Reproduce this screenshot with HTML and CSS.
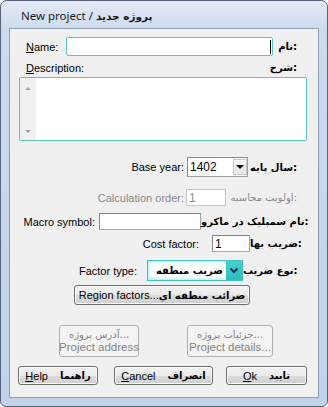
FILE: index.html
```html
<!DOCTYPE html>
<html>
<head>
<meta charset="utf-8">
<link rel="stylesheet" href="styles.css">
</head>
<body>
<div class="window">
  <div class="titlebar"><span class="title">New project / <span class="title-fa">پروژه جدید</span></span></div>
  <div class="client">
    <div class="row row-name">
      <span class="en en-name"><u>N</u>ame:</span>
      <div class="edit edit-teal name-edit"><span class="caret"></span></div>
      <span class="fa fa-name">نام:</span>
    </div>
    <div class="row row-desc">
      <span class="en en-desc"><u>D</u>escription:</span>
      <span class="fa">شرح:</span>
    </div>
    <div class="memo">
      <div class="vscroll"><span class="arr arr-up"></span><span class="arr arr-down"></span></div>
    </div>
    <div class="row row-base">
      <span class="en en-base">Base year:</span>
      <div class="combo combo-base"><span class="combo-val">1402</span><span class="combo-btn"><span class="tri"></span></span></div>
      <span class="fa fa-base">سال پایه:</span>
    </div>
    <div class="row row-calc">
      <span class="en en-calc dis">Calculation order:</span>
      <div class="edit edit-dis calc-edit">1</div>
      <span class="fa fa-calc fa-dis">اولویت محاسبه:</span>
    </div>
    <div class="row row-macro">
      <span class="en en-macro">Macro symbol:</span>
      <div class="edit edit-std macro-edit"></div>
      <span class="fa fa-macro">نام سمبلیک در ماکرو:</span>
    </div>
    <div class="row row-cost">
      <span class="en en-cost">Cost factor:</span>
      <div class="edit edit-std cost-edit">1</div>
      <span class="fa fa-cost">ضریب بها:</span>
    </div>
    <div class="row row-factor">
      <span class="en en-factor">Factor type:</span>
      <div class="fcombo"><span class="fcombo-val">ضریب منطقه</span><span class="fcombo-btn"><svg width="10" height="7" viewBox="0 0 10 7"><polyline points="1.5,1.5 5,5 8.5,1.5" fill="none" stroke="#0d2f55" stroke-width="2"/></svg></span></div>
      <span class="fa fa-factor">نوع ضریب:</span>
    </div>
    <div class="btn btn-region"><span>Region factors...</span><span class="fab">ضرائب منطقه اي</span></div>
    <div class="row-proj">
      <div class="btn btn-dis btn-addr"><span class="fa-line">آدرس پروژه...</span><span>Project address</span></div>
      <div class="btn btn-dis btn-det"><span class="fa-line">جزئیات پروژه...</span><span>Project details...</span></div>
    </div>
    <div class="row-bottom">
      <div class="btn btn-help"><span><u>H</u>elp</span><span class="fab">راهنما</span></div>
      <div class="btn btn-cancel"><span><u>C</u>ancel</span><span class="fab">انصراف</span></div>
      <div class="btn btn-ok"><span><u>O</u>k</span><span class="fab">تایید</span></div>
    </div>
  </div>
</div>
</body>
</html>
```
FILE: styles.css
```css
html, body {
  margin: 0;
  background: #ffffff;
}

.window {
  width: 328px;
  height: 407px;
  box-sizing: border-box;
  border: 1px solid #56637a;
  border-radius: 7px 7px 6px 6px;
  background: linear-gradient(to bottom, #e2eaf5 0px, #cddbee 28px, #c0d3ea 100%);
  padding: 0 8px 8px;
  display: flex;
  flex-direction: column;
}

.titlebar {
  height: 27px;
  display: flex;
  align-items: center;
  padding-left: 12px;
  padding-top: 1px;
  box-sizing: border-box;
}

.title {
  font: 11.5px "Noto Sans", "DejaVu Sans", sans-serif;
  color: #1b1b1b;
}

.title-fa {
  font-family: "DejaVu Sans", sans-serif;
  font-weight: bold;
  font-size: 10.5px;
}

.client {
  flex: 1;
  border: 1px solid #8d9db3;
  background: #f0f0f0;
  display: flex;
  flex-direction: column;
  padding-top: 8px;
  font: 11px "Liberation Sans", "DejaVu Sans", sans-serif;
  color: #000;
}

.row {
  display: flex;
  align-items: center;
  padding-right: 21px;
  flex-shrink: 0;
}

.en {
  flex: 1;
  text-align: right;
  white-space: nowrap;
}

.fa {
  font-family: "DejaVu Sans", sans-serif;
  font-weight: bold;
  font-size: 10px;
  text-align: right;
  white-space: nowrap;
}

.fab {
  font-family: "DejaVu Sans", sans-serif;
  font-weight: bold;
  font-size: 10px;
}

.dis, .fa-dis {
  color: #8a8a8a;
}

.fa-dis {
  font-weight: normal;
}

/* Name row */
.row-name { height: 19px; padding-left: 16px; }
.en-name { flex: 0 0 40px; text-align: left; }
.name-edit { width: 207px; justify-content: flex-end; padding-right: 1px; border-radius: 2px; }
.fa-name { width: 24px; }
.caret { width: 1px; height: 14px; background: #000; }

/* Description label row */
.row-desc { height: 13px; margin-top: 5px; padding-left: 16px; }
.en-desc { text-align: left; }

.memo {
  margin-top: 3px;
  margin-left: 9px;
  width: 288px;
  height: 64px;
  box-sizing: border-box;
  border: 1px solid #5ec6c1;
  border-radius: 2px;
  background: #fff;
  display: flex;
  flex-shrink: 0;
}

.vscroll {
  width: 16px;
  background: #f1f1f1;
  box-sizing: border-box;
  padding: 9px 0 7px;
  display: flex;
  flex-direction: column;
  justify-content: space-between;
  align-items: center;
}

.arr {
  width: 0;
  height: 0;
  border-left: 3px solid transparent;
  border-right: 3px solid transparent;
}
.arr-up { border-bottom: 3px solid #a3a3a3; }
.arr-down { border-top: 3px solid #a3a3a3; }

/* Generic edits */
.edit {
  box-sizing: border-box;
  height: 100%;
  background: #fff;
  display: flex;
  align-items: center;
  padding-left: 2px;
}
.edit-teal { border: 1px solid #5ec6c1; }
.edit-std { border: 1px solid #a7a7a7; border-top-color: #848484; border-left-color: #8a8a8a; }
.edit-dis { border: 1px solid #c6c6c6; color: #8d8d8d; }

/* Base year */
.row-base { height: 20px; margin-top: 16px; }
.en-base { padding-right: 3px; }
.combo {
  box-sizing: border-box;
  height: 100%;
  background: #fff;
  border: 1px solid #9f9f9f;
  border-top-color: #8a8a8a;
  border-left-color: #8a8a8a;
  display: flex;
  align-items: center;
  padding-left: 2px;
}
.combo-base { width: 61px; }
.combo-val { flex: 1; font-size: 12px; }
.combo-btn {
  width: 14px;
  height: 16px;
  box-sizing: border-box;
  border: 1px solid #c8c8c8;
  background: linear-gradient(#f6f6f6, #e6e6e6);
  display: flex;
  align-items: center;
  justify-content: center;
}
.tri {
  width: 0;
  height: 0;
  border-left: 4px solid transparent;
  border-right: 4px solid transparent;
  border-top: 4px solid #000;
}
.fa-base { width: 49px; }

/* Calc order */
.row-calc { height: 17px; margin-top: 12px; }
.en-calc { padding-right: 2px; }
.calc-edit { width: 40px; font-size: 12px; }
.fa-calc { width: 71px; }

/* Macro */
.row-macro { height: 17px; margin-top: 7px; }
.en-macro { padding-right: 4px; }
.macro-edit { width: 102px; }
.fa-macro { width: 96px; }

/* Cost */
.row-cost { height: 17px; margin-top: 5px; }
.en-cost { padding-right: 13px; }
.cost-edit { width: 38px; font-size: 12px; }
.fa-cost { width: 47px; }

/* Factor type */
.row-factor { height: 21px; margin-top: 8px; }
.en-factor { padding-right: 10px; }
.fcombo {
  width: 96px;
  height: 100%;
  box-sizing: border-box;
  border: 1px solid #43c2c0;
  background: #ffffff;
  box-shadow: inset 0 0 3px 1px #9eeeee;
  display: flex;
  align-items: center;
}
.fcombo-val {
  flex: 1;
  text-align: right;
  padding-right: 3px;
  font-family: "DejaVu Sans", sans-serif;
  font-weight: bold;
  font-size: 10px;
}
.fcombo-btn {
  width: 16px;
  height: 100%;
  background: linear-gradient(#49cfcf, #2dbdbd);
  display: flex;
  align-items: center;
  justify-content: center;
}
.fa-factor { width: 54px; }

/* Buttons */
.btn {
  box-sizing: border-box;
  border: 1px solid #707070;
  border-radius: 3px;
  background: linear-gradient(#f2f2f2 0%, #ebebeb 50%, #dddddd 51%, #cfcfcf 100%);
  box-shadow: inset 0 0 0 1px #fbfbfb;
  display: flex;
  align-items: center;
  justify-content: center;
  gap: 12px;
  flex-shrink: 0;
  white-space: nowrap;
}
.btn-dis {
  border-color: #adb2b5;
  background: #f4f4f4;
  box-shadow: none;
  color: #838383;
  flex-direction: column;
  gap: 1px;
  font-size: 11.5px;
}
.fa-line {
  font-family: "DejaVu Sans", sans-serif;
  font-size: 10px;
}

.btn-region {
  margin-top: 4px;
  margin-left: 64px;
  width: 176px;
  height: 20px;
  gap: 0;
}

.row-proj {
  display: flex;
  margin-top: 20px;
  padding-left: 49px;
  height: 32px;
  flex-shrink: 0;
}
.btn-addr { width: 80px; }
.btn-det { width: 86px; margin-left: 48px; }

.row-bottom {
  display: flex;
  margin-top: 9px;
  padding-left: 8px;
  height: 19px;
  flex-shrink: 0;
}
.btn-help { width: 80px; }
.btn-cancel { width: 99px; margin-left: 16px; }
.btn-ok { width: 81px; margin-left: 13px; }
```
